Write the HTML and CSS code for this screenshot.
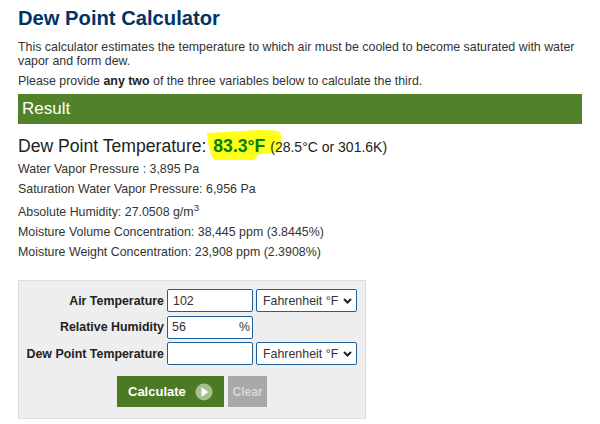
FILE: index.html
```html
<!DOCTYPE html>
<html lang="en">
<head>
<meta charset="utf-8">
<title>Dew Point Calculator</title>
<link rel="stylesheet" href="styles.css">
</head>
<body>
<main class="page">
  <h1 class="title">Dew Point Calculator</h1>
  <p class="intro">This calculator estimates the temperature to which air must be cooled to become saturated with water vapor and form dew.</p>
  <p class="intro second">Please provide <b>any two</b> of the three variables below to calculate the third.</p>
  <h2 class="result-bar">Result</h2>
  <p class="headline">Dew Point Temperature: <span class="mark"><svg class="blob" viewBox="0 0 76 31" aria-hidden="true"><path d="M1 3 Q20 2 36 1 Q60 -1 72 1 Q76 3 75 12 Q75 20 73 22 Q62 24 52 24 Q50 29 48 30 L10 30 Q6 29 5 24 Q2 16 1 3 Z" fill="#ffff1a"/></svg><b class="value">83.3°F</b></span> <span class="alt">(28.5°C or 301.6K)</span></p>
  <ul class="stats">
    <li>Water Vapor Pressure : 3,895 Pa</li>
    <li>Saturation Water Vapor Pressure: 6,956 Pa</li>
    <li class="abs">Absolute Humidity: 27.0508 g/m<sup>3</sup></li>
    <li>Moisture Volume Concentration: 38,445 ppm (3.8445%)</li>
    <li>Moisture Weight Concentration: 23,908 ppm (2.3908%)</li>
  </ul>
  <form class="calc">
    <div class="grid">
      <label class="lbl" for="air">Air Temperature</label>
      <input class="field" id="air" type="text" value="102">
      <select class="unit" aria-label="Air temperature unit"><option>Fahrenheit °F</option></select>
      <label class="lbl" for="rh">Relative Humidity</label>
      <div class="pct-wrap"><input class="field pct" id="rh" type="text" value="56"><span class="pct-sign">%</span></div>
      <span></span>
      <label class="lbl" for="dew">Dew Point Temperature</label>
      <input class="field" id="dew" type="text">
      <select class="unit" aria-label="Dew point unit"><option>Fahrenheit °F</option></select>
    </div>
    <div class="actions">
      <button class="btn calc-btn" type="button">Calculate
        <svg class="play" viewBox="0 0 18 18" aria-hidden="true"><circle cx="9" cy="9" r="8.5" fill="#a5c18f"/><path d="M6.5 4.2 L13.4 9 L6.5 13.8 Z" fill="#fff"/></svg>
      </button>
      <button class="btn clear-btn" type="button">Clear</button>
    </div>
  </form>
</main>
</body>
</html>
```
FILE: styles.css
```css
* { box-sizing: border-box; }
html, body { margin: 0; background: #fff; }
body {
  width: 600px;
  height: 424px;
  overflow: hidden;
  font-family: "Liberation Sans", Arial, sans-serif;
  color: #333;
}
.page { padding: 6px 18px 0; }
.title {
  margin: 0;
  font-size: 20.2px;
  line-height: 24px;
  font-weight: bold;
  color: #003366;
}
.intro {
  margin: 10px 0 0;
  font-size: 12.4px;
  line-height: 14px;
}
.intro.second { margin-top: 6px; }
.intro b { color: #222; }
.result-bar {
  margin: 6px 0 0;
  height: 29.5px;
  padding: 0 4px;
  background: #51822a;
  color: #fff;
  font-size: 17px;
  font-weight: normal;
  line-height: 29px;
}
.headline {
  margin: 11px 0 0;
  font-size: 17.6px;
  line-height: 22px;
  color: #222;
  white-space: nowrap;
}
.mark { position: relative; display: inline-block; margin-left: 2px; }
.blob {
  position: absolute;
  left: -7px;
  top: -5px;
  width: 76px;
  height: 31px;
}
.value {
  position: relative;
  color: #008000;
  font-size: 17.6px;
}
.alt { position: relative; font-size: 14px; }
.stats { list-style: none; margin: 4.5px 0 0; padding: 0; font-size: 12.4px; line-height: 14px; }
.stats li { margin-bottom: 6px; }
.stats li.abs { margin-top: 9px; }
.stats sup { font-size: 9.5px; line-height: 0; }
.calc {
  width: 348px;
  height: 139px;
  margin-top: 21px;
  padding: 8px 8px 0 0;
  background: #eee;
  border: 1px solid #ddd;
}
.grid {
  display: grid;
  grid-template-columns: 145px 86px 101px;
  grid-auto-rows: 23px;
  column-gap: 3px;
  row-gap: 3.5px;
  align-items: center;
}
.lbl { font-size: 12.4px; font-weight: bold; text-align: right; color: #222; }
.field, .unit {
  height: 23px;
  width: 100%;
  border: 1px solid #1f5f99;
  border-radius: 2px;
  background: #fff;
  font-family: "Liberation Sans", Arial, sans-serif;
  font-size: 12.4px;
  color: #333;
}
.field { padding: 0 5px; }
.field.pct { padding-left: 4px; }
.unit {
  appearance: none;
  padding: 0 14px 0 6px;
  background-image: url("data:image/svg+xml,%3Csvg xmlns='http://www.w3.org/2000/svg' width='9' height='6'%3E%3Cpath d='M1 1 L4.5 4.5 L8 1' fill='none' stroke='%23222' stroke-width='2'/%3E%3C/svg%3E");
  background-repeat: no-repeat;
  background-position: right 4px center;
}
.pct-wrap { position: relative; height: 23px; }
.pct-sign { position: absolute; right: 3px; top: 4px; font-size: 12.4px; line-height: 14px; }
.actions {
  display: flex;
  gap: 4px;
  margin-top: 11px;
  padding-left: 98px;
}
.btn {
  height: 31px;
  border: 0;
  font-family: "Liberation Sans", Arial, sans-serif;
  font-weight: bold;
  font-size: 13px;
  color: #fff;
}
.calc-btn {
  display: flex;
  align-items: center;
  gap: 9px;
  width: 107px;
  padding: 0 0 0 11px;
  background: #4a7a24;
}
.play { width: 18px; height: 18px; }
.clear-btn { width: 39px; padding: 0; background: #a9a9a9; color: #d8d8d8; font-size: 12px; }
```
